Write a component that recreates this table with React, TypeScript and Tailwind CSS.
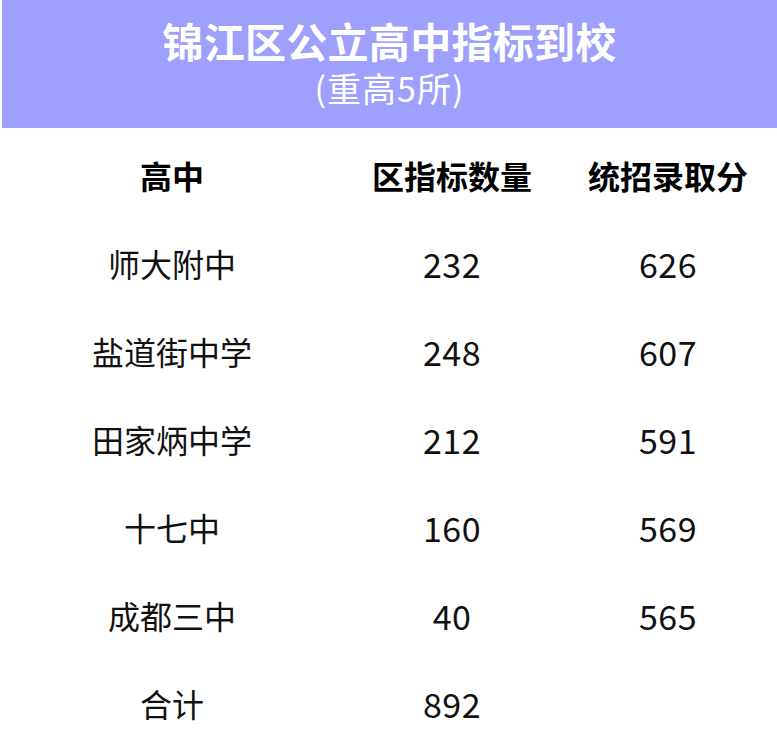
const rows = [
    ['师大附中', '232', '626'],
    ['盐道街中学', '248', '607'],
    ['田家炳中学', '212', '591'],
    ['十七中', '160', '569'],
    ['成都三中', '40', '565'],
    ['合计', '892', ''],
]

const font = { fontFamily: '"Noto Sans CJK SC", "Noto Sans", sans-serif' }

export default function App() {
    return (
        <div className="h-[754px] w-[777px] overflow-hidden bg-white" style={font}>
            <div className="ml-[2px] flex h-[128px] flex-col items-center bg-[#9f9ffd] pt-[15px] text-white">
                <h1 className="text-[41px] font-bold leading-[50px] tracking-[0.3px]">锦江区公立高中指标到校</h1>
                <p className="text-[34px] leading-[46px] tracking-[1px]">(重高5所)</p>
            </div>

            <div className="pt-[3px]">
                <div className="grid h-[88px] grid-cols-[344px_216px_216px] items-center text-center text-[32px] font-bold text-black">
                    <div>高中</div>
                    <div>区指标数量</div>
                    <div>统招录取分</div>
                </div>
                {rows.map(([name, quota, score]) => (
                    <div
                        key={name}
                        className="grid h-[88px] grid-cols-[344px_216px_216px] items-center text-center text-[#111]"
                    >
                        <div className="text-[32px]">{name}</div>
                        <div className="text-[34px] tracking-[0.5px]">{quota}</div>
                        <div className="text-[34px] tracking-[0.5px]">{score}</div>
                    </div>
                ))}
            </div>
        </div>
    )
}
